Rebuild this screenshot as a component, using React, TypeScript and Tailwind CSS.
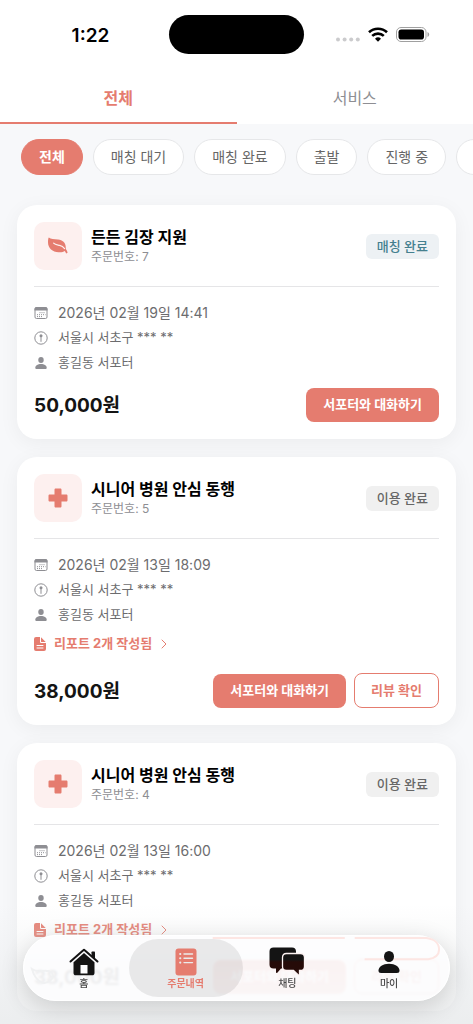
import type { ReactNode } from 'react'
import { clsx } from 'clsx'

type OrderStatus = 'matched' | 'done'

interface Order {
  id: number
  title: string
  kind: 'leaf' | 'cross'
  status: OrderStatus
  date: string
  address: string
  supporter: string
  price: string
  reports: number
}

const orders: Order[] = [
  { id: 7, title: '든든 김장 지원', kind: 'leaf', status: 'matched', date: '2026년 02월 19일 14:41', address: '서울시 서초구 *** **', supporter: '홍길동 서포터', price: '50,000원', reports: 0 },
  { id: 5, title: '시니어 병원 안심 동행', kind: 'cross', status: 'done', date: '2026년 02월 13일 18:09', address: '서울시 서초구 *** **', supporter: '홍길동 서포터', price: '38,000원', reports: 2 },
  { id: 4, title: '시니어 병원 안심 동행', kind: 'cross', status: 'done', date: '2026년 02월 13일 16:00', address: '서울시 서초구 *** **', supporter: '홍길동 서포터', price: '38,000원', reports: 2 },
]

const filters = ['전체', '매칭 대기', '매칭 완료', '출발', '진행 중', '서비스 완료']

function LeafIcon() {
  return (
    <svg viewBox="0 0 20 18" className="w-5 h-[18px]" fill="none">
      <path
        d="M.8.6C2.8 2.6 6 2 10 2.4c4.600.5 7.600 3.300 7.700 7.200 0 1.200.1 2.100.3 2.700.7.8 1.300 1.900 1.600 3.500l-1.500.7c-.3-1.100-.7-1.900-1.300-2.600-1.500 1.200-3.700 1.500-6.300 1.300C4.600 14.800 0 11.300 0 5.200 0 3.200.2 1.600.8.600Z"
        fill="#e57c6f"
      />
      <path d="M5.600 6.200c1.800 1.800 3.900 1.700 6 2.200 2.200.5 3.700 1.500 5 3.200" stroke="#fdf0ef" strokeWidth="1.200" strokeLinecap="round" />
    </svg>
  )
}

function CrossIcon() {
  return (
    <svg viewBox="0 0 20 20" className="w-5 h-5" fill="#e57c6f">
      <path d="M7.800.5h4.400c.8 0 1.300.5 1.300 1.300v4.700h4.700c.8 0 1.300.5 1.300 1.300v4.400c0 .8-.5 1.300-1.300 1.300h-4.700v4.700c0 .8-.5 1.300-1.300 1.300H7.800c-.8 0-1.300-.5-1.300-1.300v-4.700H1.800c-.8 0-1.300-.5-1.300-1.300V7.800c0-.8.5-1.300 1.300-1.300h4.700V1.800c0-.8.5-1.300 1.300-1.300Z" />
    </svg>
  )
}

function CalendarIcon() {
  return (
    <svg viewBox="0 0 14 14" className="w-3.5 h-3.5" fill="none">
      <rect x="1" y="1.500" width="12" height="11" rx="1.500" stroke="#8e8e93" />
      <path d="M.5 4.500V3A2 2 0 0 1 2.500 1h9a2 2 0 0 1 2 2v1.500Z" fill="#8e8e93" />
      <path d="M5.500 6.700h6M3 8.700h8.500M3 10.600h6" stroke="#8e8e93" strokeWidth="1" strokeDasharray="1 1" />
    </svg>
  )
}

function PlaceIcon() {
  return (
    <svg viewBox="0 0 14 14" className="w-3.5 h-3.5" fill="none" stroke="#8e8e93">
      <circle cx="7" cy="7" r="6.200" />
      <circle cx="7" cy="4.800" r="1.500" fill="#8e8e93" stroke="none" />
      <path d="M7 5v5.800" />
    </svg>
  )
}

function PersonIcon({ className }: { className: string }) {
  return (
    <svg viewBox="0 0 22 22" className={className} fill="currentColor">
      <ellipse cx="11" cy="5.500" rx="5" ry="5.500" />
      <path d="M.5 19.500C.5 16 4.800 12.800 11 12.800S21.500 16 21.500 19.500c0 1.700-.8 2.500-2.600 2.500H3.100C1.300 22 .5 21.200.5 19.500Z" />
    </svg>
  )
}

function ReportIcon() {
  return (
    <svg viewBox="0 0 12 14" className="w-3 h-3.5">
      <path d="M2 0h4v4.500C6 5.600 6.600 6 7.500 6H12v6a2 2 0 0 1-2 2H2a2 2 0 0 1-2-2V2a2 2 0 0 1 2-2Zm5 .2L11.700 5H7.600C7.200 5 7 4.800 7 4.400Z" fill="#e57c6f" />
      <path d="M3 8.500h6M3 11h6" stroke="#fff" strokeLinecap="round" />
    </svg>
  )
}

function HomeIcon() {
  return (
    <svg viewBox="0 0 30 28" className="w-[30px] h-7">
      <path d="M1.500 13.500 14.300 2.200a1 1 0 0 1 1.400 0l12.800 11.300" fill="none" stroke="#141414" strokeWidth="2" strokeLinecap="round" />
      <path d="M22.500 4.200c0-.5.3-.7.700-.7h2.100c.4 0 .7.200.7.700v7.300l-3.500-3Z" fill="#141414" />
      <path d="M15 5 4.500 14.300V25c0 1.400.9 2.300 2.300 2.300h16.400c1.400 0 2.300-.9 2.300-2.300V14.300Z" fill="#141414" />
      <path d="M11.500 17h7v8.500h-7Z" fill="#fdfdfe" />
    </svg>
  )
}

function OrdersIcon() {
  return (
    <svg viewBox="0 0 22 28" className="w-[22px] h-7">
      <rect x=".5" y=".5" width="21" height="27" rx="3" fill="#e57c6f" />
      <path d="M9 6h8.500M9 10.300h8.500M9 14.600h8.500" stroke="#ebebec" strokeWidth="1.400" strokeLinecap="round" />
      <path d="M5.200 6h.1M5.200 10.300h.1M5.200 14.600h.1" stroke="#ebebec" strokeWidth="2.100" strokeLinecap="round" />
    </svg>
  )
}

function ChatIcon() {
  return (
    <svg viewBox="0 0 36 30" className="w-9 h-[30px]">
      <defs>
        <linearGradient id="bubble" gradientUnits="userSpaceOnUse" x1="0" y1="0" x2="0" y2="30">
          <stop offset="42%" stopColor="#141414" />
          <stop offset="50%" stopColor="#260b08" />
        </linearGradient>
      </defs>
      <path d="M4.500.5h18.500c2.700 0 4 1.300 4 4v13c0 2.700-1.300 4-4 4H12l-3.500 4c-.8.900-1.500.600-1.500-.500v-3.500H4.500c-2.700 0-4-1.300-4-4v-13c0-2.700 1.300-4 4-4Z" fill="url(#bubble)" />
      <path d="M17.500 6.500h14c2.700 0 4 1.300 4 4v9c0 2.700-1.300 4-4 4H30.500V27c0 1.100-.7 1.400-1.500.6L24.500 23.500h-7c-2.700 0-4-1.300-4-4v-9c0-2.700 1.300-4 4-4Z" fill="url(#bubble)" stroke="#fdf4f4" strokeWidth="1.300" />
    </svg>
  )
}

function StatusBar() {
  return (
    <div className="grid h-[72px] grid-cols-[1fr_auto_1fr] items-start bg-white">
      <span className="mt-6 pl-3 text-center font-[Inter] text-[19px] leading-6 font-semibold text-black">1:22</span>
      <div className="mt-[15px] h-[39px] w-[135px] rounded-full bg-black" />
      <div className="mt-6 flex h-5 items-center justify-center gap-2 pr-3">
        <svg viewBox="0 0 24 20" className="h-5 w-6" fill="#cbcbcd">
          <circle cx="2" cy="15.500" r="2" />
          <circle cx="8.600" cy="15.500" r="2" />
          <circle cx="15.200" cy="15.500" r="2" />
          <circle cx="21.800" cy="15.500" r="2" />
        </svg>
        <svg viewBox="0 0 20 15" className="h-[15px] w-5" fill="none" stroke="#000" strokeWidth="2.600">
          <path d="M1 5.300a13 13 0 0 1 18 0M4.200 8.900a8.400 8.400 0 0 1 11.600 0" />
          <path d="m10 14.800-3-3.100a4.400 4.400 0 0 1 6 0Z" fill="#000" stroke="none" />
        </svg>
        <svg viewBox="0 0 34 15" className="h-[15px] w-[34px]">
          <rect x=".5" y=".5" width="29.500" height="14" rx="4.500" fill="none" stroke="#a0a0a0" />
          <rect x="2.500" y="2.500" width="25.500" height="10" rx="2.800" />
          <path d="M31.500 5v5c1-.4 1.700-1.300 1.700-2.500S32.500 5.400 31.500 5Z" fill="#a0a0a0" />
        </svg>
      </div>
    </div>
  )
}

function InfoRow({ icon, children, className }: { icon: ReactNode; children: ReactNode; className?: string }) {
  return (
    <li className={clsx('flex h-[25px] items-center gap-[10px] text-[#6c6c6e]', className ?? 'text-[13px]')}>
      <span className="flex w-3.5 justify-center">{icon}</span>
      {children}
    </li>
  )
}

function OrderCard({ order }: { order: Order }) {
  const done = order.status === 'done'

  return (
    <article className="rounded-[20px] bg-white px-[17px] py-[17px] shadow-[0_4px_20px_rgba(0,0,0,0.05)]">
      <header className="flex h-12 items-center">
        <div className="flex size-12 items-center justify-center rounded-[10px] bg-[#fdf0ef]">
          {order.kind === 'leaf' ? <LeafIcon /> : <CrossIcon />}
        </div>
        <div className="ml-[9px] flex-1">
          <h2 className="text-base leading-[22px] font-bold text-black">{order.title}</h2>
          <p className="text-xs leading-[18px] text-[#8e8e93]">주문번호: {order.id}</p>
        </div>
        <span
          className={clsx(
            'rounded-md px-[11px] text-[13px] leading-[25px] font-medium',
            done ? 'bg-[#f0f0f0] text-[#666]' : 'bg-[#edf1f4] text-[#45808f]'
          )}
        >
          {done ? '이용 완료' : '매칭 완료'}
        </span>
      </header>

      <ul className="mt-4 border-t border-[#e5e5e7] pt-[13px]">
        <InfoRow icon={<CalendarIcon />} className="text-sm">{order.date}</InfoRow>
        <InfoRow icon={<PlaceIcon />}>{order.address}</InfoRow>
        <InfoRow icon={<PersonIcon className="size-3 text-[#8e8e93]" />}>{order.supporter}</InfoRow>
      </ul>

      {order.reports > 0 && (
        <button className="mt-1 mb-[17px] flex h-[25px] items-center gap-2 text-[13px] font-bold text-[#e57c6f]">
          <ReportIcon />
          리포트 {order.reports}개 작성됨
          <svg viewBox="0 0 8 10" className="h-2.5 w-2" fill="none" stroke="#e57c6f" strokeLinecap="round">
            <path d="m2 1 4 4-4 4" />
          </svg>
        </button>
      )}

      <footer className={clsx('flex h-[35px] items-center gap-2', order.reports === 0 && 'mt-3')}>
        <strong className="flex-1 pt-1 text-[19px] font-bold text-[#141414]">{order.price}</strong>
        <button className="h-[34px] rounded-lg bg-[#e57c6f] px-[17px] text-[13px] font-bold text-white">서포터와 대화하기</button>
        {done && (
          <button className="h-[35px] rounded-lg border border-[#e57c6f] bg-white px-4 text-[13px] font-bold text-[#e57c6f]">리뷰 확인</button>
        )}
      </footer>
    </article>
  )
}

function NavItem({ label, icon, active }: { label: string; icon: ReactNode; active?: boolean }) {
  return (
    <a
      href="#"
      className={clsx(
        'relative flex h-[58px] flex-col items-center rounded-full pt-2 text-[10px]',
        active ? '-mx-[6px] bg-black/8 font-bold text-[#e57c6f]' : 'font-medium text-[#4a4a4a]'
      )}
    >
      <span className="flex h-[30px] items-center">{icon}</span>
      <span className="leading-3">{label}</span>
    </a>
  )
}

export default function App() {
  return (
    <div className="relative flex h-screen flex-col overflow-hidden bg-[#f7f8fa] font-[Inter,'Noto_Sans_CJK_KR',sans-serif]">
      <StatusBar />

      <div role="tablist" className="grid h-[52px] shrink-0 grid-cols-2 bg-white text-base">
        <button role="tab" aria-selected="true" className="border-b-2 border-[#e57c6f] pt-0.5 font-bold text-[#e57c6f]">전체</button>
        <button role="tab" aria-selected="false" className="border-b-2 border-transparent pt-0.5 text-[#8e8e93]">서비스</button>
      </div>

      <div className="mt-[15px] flex shrink-0 gap-[10px] overflow-hidden pl-[21px]">
        {filters.map((f, i) => (
          <button
            key={f}
            className={clsx(
              'h-9 shrink-0 rounded-full border px-[17px] text-sm whitespace-nowrap',
              i === 0 ? 'border-[#e57c6f] bg-[#e57c6f] font-bold text-white' : 'border-[#e6e7e9] bg-white text-[#666]'
            )}
          >
            {f}
          </button>
        ))}
      </div>

      <main className="mt-[30px] flex flex-col gap-[18px] px-[17px]">
        {orders.map((order) => (
          <OrderCard key={order.id} order={order} />
        ))}
      </main>

      {/* floating tab bar */}
      <div className="pointer-events-none absolute inset-x-0 bottom-0 h-[120px] bg-gradient-to-b from-transparent to-[#e9ebec]/80" />
      <nav className="absolute inset-x-[23px] bottom-[23px] grid h-[66px] grid-cols-4 items-center rounded-full border border-white bg-[#fdfdfe]/88 px-[9px] shadow-[0_6px_24px_rgba(0,0,0,0.16)] backdrop-blur-[1px]">
        {/* glass edge reflections */}
        <svg viewBox="0 0 428 66" preserveAspectRatio="none" className="absolute inset-0 size-full" fill="none" stroke="#fde6e3" strokeWidth="2">
          <path d="M190 2h133M333 2h72c9 1 13 6 13 12s-4 9-11 10h-64" />
          <path d="M8 34c8 6 14-2 20 4 4 5-4 12-10 10-4-2-8-6-10-14Z" stroke="#f0f1f2" />
        </svg>
        <NavItem label="홈" icon={<HomeIcon />} />
        <NavItem label="주문내역" icon={<OrdersIcon />} active />
        <NavItem label="채팅" icon={<ChatIcon />} />
        <NavItem label="마이" icon={<PersonIcon className="size-[22px] text-[#141414]" />} />
      </nav>
    </div>
  )
}
